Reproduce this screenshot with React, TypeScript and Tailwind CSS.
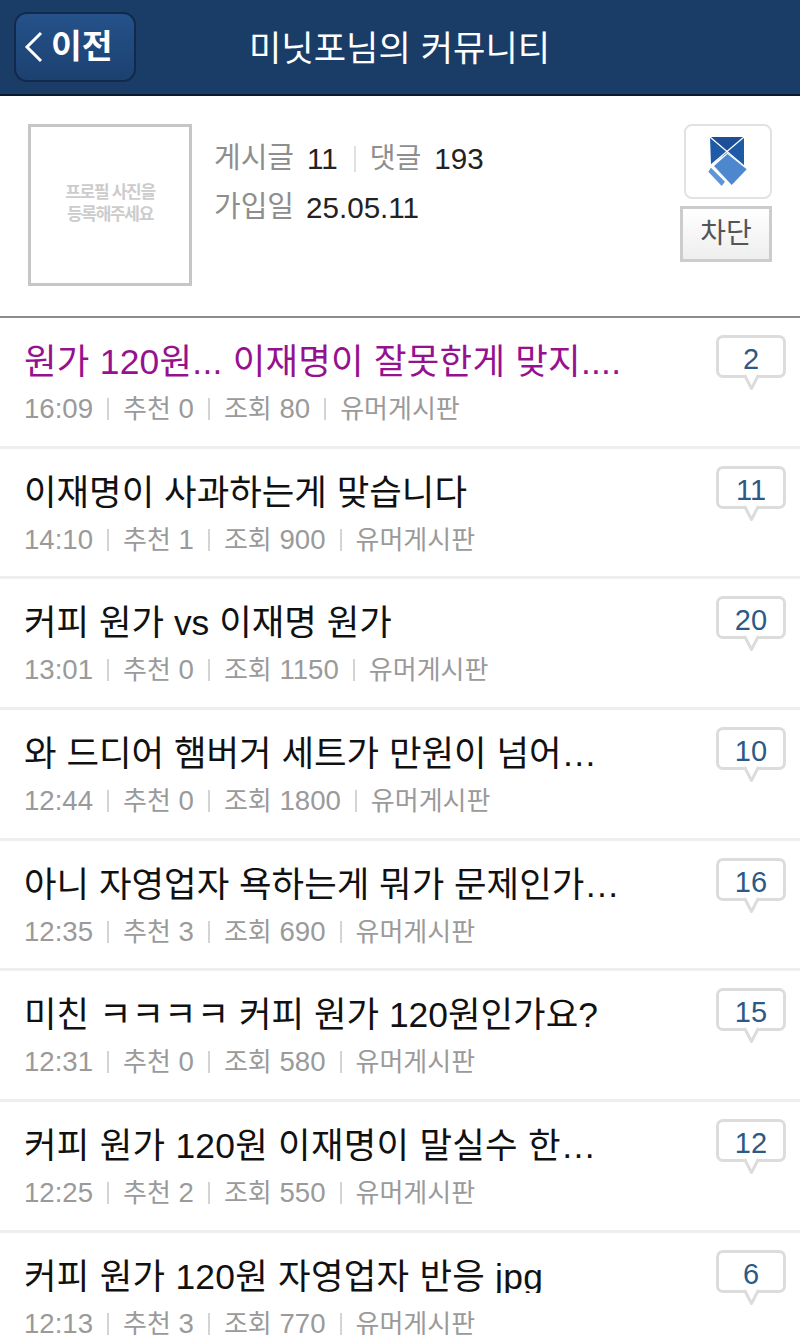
const font = 'font-["Liberation_Sans","Noto_Sans_CJK_KR",sans-serif]';

const rows = [
  { t: "원가 120원... 이재명이 잘못한게 맞지....", time: "16:09", up: 0, view: 80, n: 2, active: true, wide: true },
  { t: "이재명이 사과하는게 맞습니다", time: "14:10", up: 1, view: 900, n: 11 },
  { t: "커피 원가 vs 이재명 원가", time: "13:01", up: 0, view: 1150, n: 20 },
  { t: "와 드디어 햄버거 세트가 만원이 넘어…", time: "12:44", up: 0, view: 1800, n: 10 },
  { t: "아니 자영업자 욕하는게 뭐가 문제인가…", time: "12:35", up: 3, view: 690, n: 16 },
  { t: "미친 ㅋㅋㅋㅋ 커피 원가 120원인가요?", time: "12:31", up: 0, view: 580, n: 15 },
  { t: "커피 원가 120원 이재명이 말실수 한…", time: "12:25", up: 2, view: 550, n: 12, wide: true },
  { t: "커피 원가 120원 자영업자 반응 jpg", time: "12:13", up: 3, view: 770, n: 6, clip: true, wide: true },
];

function Sep() {
  return <span className="mx-[14px] inline-block h-[22px] w-[2px] bg-[#d4d4d4]" />;
}

function Bubble({ n }: { n: number }) {
  return (
    <div className="relative -mt-[3px] flex h-[43px] w-[70px] items-center justify-center rounded-[7px] border-[3px] border-[#dcdcdc] bg-white pt-[6px] text-[29px] leading-none text-[#2c5a85]">
      {n}
      <svg className="absolute left-[24px] top-[35px]" width="17" height="18" viewBox="0 0 17 18">
        <path d="M1.5 2 L8.5 15.5 L15.5 2" fill="#fff" stroke="#dcdcdc" strokeWidth="3" strokeLinejoin="round" />
      </svg>
    </div>
  );
}

function Row({ r }: { r: (typeof rows)[number] }) {
  return (
    <div className="flex h-[130.7px] shrink-0 border-b-[3px] border-[#eeeeee] pl-[24px] pr-[14px] pt-[20px]">
      <div className="min-w-0 flex-1">
        <div className={`h-[40px] whitespace-nowrap text-[35.4px] leading-[48px] ${r.wide ? "tracking-[0.25px]" : ""} ${r.clip ? "overflow-hidden" : ""} ${r.active ? "text-[#96118f]" : "text-[#111111]"}`}>
          {r.t}
        </div>
        <div className="mt-[11px] flex h-[40px] items-center whitespace-nowrap text-[27.6px] leading-[40px] text-[#9a9a9a]">
          <span>{r.time}</span>
          <Sep />
          <span><span className="text-[26px]">추천</span> {r.up}</span>
          <Sep />
          <span><span className="text-[26px]">조회</span> {r.view}</span>
          <Sep />
          <span className="text-[26px]">유머게시판</span>
        </div>
      </div>
      <Bubble n={r.n} />
    </div>
  );
}

export default function App() {
  return (
    <div className={`flex h-[1335px] w-[800px] flex-col overflow-hidden bg-white ${font}`}>
      <header className="flex h-[96px] shrink-0 items-center border-b-[2px] border-[#0c1a30] bg-[#1a3d68] pl-[14px]">
        <div className="flex h-[70px] w-[122px] items-center rounded-[13px] border-[2px] border-[#12294b] bg-gradient-to-b from-[#24528a] to-[#1c4170] pl-[8px] text-white">
          <svg width="20" height="32" viewBox="0 0 20 32" className="mr-[7px]">
            <path d="M17 2 L3 16 L17 30" fill="none" stroke="#fff" strokeWidth="3" />
          </svg>
          <span className="text-[33.5px] font-bold leading-none">이전</span>
        </div>
        <h1 className="ml-[113px] pt-[3px] text-[35.2px] font-normal leading-none text-white">미닛포님의 커뮤니티</h1>
      </header>

      <section className="flex h-[222px] shrink-0 border-b-[2px] border-[#8c8c8c] pl-[28px] pt-[28px]">
        <div className="flex h-[162px] w-[164px] shrink-0 flex-col items-center justify-center border-[3px] border-[#c6c6c6] pb-[2px] text-center text-[17px] font-bold leading-[22px] tracking-[-1.3px] text-[#cccccc]">
          <span>프로필 사진을</span>
          <span>등록해주세요</span>
        </div>
        <div className="ml-[22px] flex-1 pt-[10px] text-[29.6px] leading-[49px]">
          <div className="flex items-center">
            <span className="text-[29px] text-[#8e8e8e]">게시글</span>
            <span className="ml-[13px] text-[#222222]">11</span>
            <span className="ml-[16px] mr-[14px] h-[26px] w-[2px] bg-[#e0e0e0]" />
            <span className="text-[28px] text-[#8e8e8e]">댓글</span>
            <span className="ml-[13px] text-[#222222]">193</span>
          </div>
          <div className="flex items-center">
            <span className="text-[29px] text-[#8e8e8e]">가입일</span>
            <span className="ml-[12px] text-[#222222]">25.05.11</span>
          </div>
        </div>
        <div className="mr-[28px] flex w-[92px] flex-col items-end">
          <div className="flex h-[75px] w-[88px] items-center justify-center rounded-[8px] border-[2px] border-[#e2e2e2]">
            <svg width="40" height="50" viewBox="0 0 40 50">
              <path d="M2 0 H36 V29 L19.5 15.7 L3 28 Z" fill="#1f5aa6" />
              <path d="M2 0 H36 L19.5 15.7 Z" fill="#1c4f96" />
              <path d="M2 0 L36 29 M36 0 L3 28" stroke="#fff" strokeWidth="1.3" />
              <path d="M19.5 17 L38.7 32.3 L23.7 48 L6 29 Z" fill="#4d88cf" />
              <path d="M0.3 34.7 L3 30.7 L17 44.7 L13.7 49 Z" fill="#5d96d8" />
            </svg>
          </div>
          <div className="mt-[7px] flex h-[56px] w-[92px] items-center justify-center border-[3px] border-[#cccccc] bg-gradient-to-b from-white to-[#eeeeee] text-[28px] leading-none text-[#555555]">
            차단
          </div>
        </div>
      </section>

      {rows.map((r) => (
        <Row key={r.time} r={r} />
      ))}
    </div>
  );
}
